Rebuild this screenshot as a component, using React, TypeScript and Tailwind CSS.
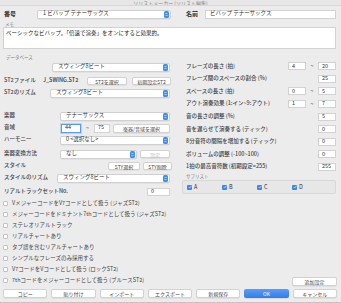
import React from "react";

const Stepper = () => (
  <span className="ml-auto mr-[1px] flex h-[7px] w-[5px] items-center justify-center rounded-[1.5px] bg-[#4190f0]">
    <svg width="3" height="5" viewBox="0 0 6 10">
      <path d="M1 4 L3 2 L5 4 M1 6 L3 8 L5 6" stroke="white" strokeWidth="1.2" fill="none" />
    </svg>
  </span>
);

const Select = ({ text, className }: { text: string; className: string }) => (
  <div
    className={
      "flex h-[9px] items-center rounded-[2px] border border-[#d0d0d0] bg-white pl-[5px] text-[5.5px] leading-none text-[#333] shadow-[0_0.5px_0.5px_rgba(0,0,0,0.08)] " +
      className
    }
  >
    <span className="whitespace-nowrap">{text}</span>
    <Stepper />
  </div>
);

const Input = ({ text, className = "w-[18px]", focus = false }: { text: string; className?: string; focus?: boolean }) => (
  <div
    className={
      "flex h-[8px] items-center bg-white pl-[3px] text-[5.5px] leading-none text-[#333] " +
      (focus ? "border border-[#5b9bf0] shadow-[0_0_0_0.8px_#a8cbf6] " : "border border-[#d2d2d2] ") +
      className
    }
  >
    {text}
  </div>
);

const Btn = ({ text, className, disabled = false }: { text: string; className: string; disabled?: boolean }) => (
  <div
    className={
      "flex h-[8px] items-center justify-center whitespace-nowrap rounded-[2px] border border-[#d2d2d2] bg-white text-[5px] leading-none shadow-[0_0.5px_0.5px_rgba(0,0,0,0.1)] " +
      (disabled ? "text-[#bbbbbb] " : "text-[#444] ") +
      className
    }
  >
    {text}
  </div>
);

const Label = ({ text, className }: { text: string; className: string }) => (
  <div className={"whitespace-nowrap pl-[1px] text-[5.5px] font-medium leading-none text-[#444] " + className}>{text}</div>
);

const Check = () => (
  <span className="flex h-[5px] w-[5px] items-center justify-center rounded-[1px] bg-[#3c87ee]">
    <svg width="4" height="4" viewBox="0 0 8 8">
      <path d="M1.5 4.2 L3.3 6 L6.6 2" stroke="white" strokeWidth="1.3" fill="none" />
    </svg>
  </span>
);

const rightRows: { label: string; a?: string; b: string }[] = [
  { label: "フレーズの長さ (拍)", a: "4", b: "20" },
  { label: "フレーズ間のスペースの割合 (%)", b: "25" },
  { label: "スペースの長さ (拍)", a: "0", b: "5" },
  { label: "アウト演奏効果 (1:イン~9:アウト)", a: "1", b: "7" },
  { label: "音の長さの調整 (%)", b: "5" },
  { label: "音を遅らせて演奏する (ティック)", b: "0" },
  { label: "8分音符の間隔を増加する (ティック)", b: "0" },
  { label: "ボリュームの調整 (-100~100)", b: "0" },
  { label: "1拍の最高音符数 (初期設定=255)", b: "255" },
];

const checks = [
  "VメジャーコードをV7コードとして扱う (ジャズST2)",
  "メジャーコードをドミナント7thコードとして扱う (ジャズST2)",
  "ステレオリアルトラック",
  "リアルチャートあり",
  "タブ譜を含むリアルチャートあり",
  "シンプルなフレーズのみ採用する",
  "V7コードをVコードとして扱う (ロックST2)",
  "7thコードをメジャーコードとして扱う (ブルースST2)",
];

export default function App() {
  return (
    <div className="h-[303px] w-[341px] overflow-hidden border-b border-[#c4c4c4] bg-[#ececec] font-['Noto_Sans_CJK_JP','Noto_Sans',sans-serif] text-[#444]">
      {/* title bar */}
      <div className="flex h-[6px] items-end justify-center overflow-hidden border-b border-[#d8d8d8] bg-[#e6e6e6]">
        <span className="mb-[0.5px] whitespace-nowrap text-[5px] leading-[5px] text-[#8a8a8a]">ソリストメーカー (ソリスト編集)</span>
      </div>

      {/* number / name */}
      <div className="mt-[3px] flex h-[10px] items-center pl-[4px] pr-[5px]">
        <div className="w-[33px] text-[6px] font-bold leading-none text-[#333]">番号</div>
        <Select text="1 ビバップ テナーサックス" className="w-[134px]" />
        <div className="ml-[15px] w-[19px] text-[6px] font-bold leading-none text-[#333]">名前</div>
        <div className="flex h-[9px] flex-1 items-center border border-[#d2d2d2] bg-white pl-[4px] text-[5.5px] leading-none text-[#333]">
          ビバップ テナーサックス
        </div>
      </div>

      {/* memo */}
      <div className="mt-[2px] h-[6px] pl-[5px] text-[4.5px] leading-[6px] text-[#777]">メモ</div>
      <div className="ml-[3px] mr-[5px] h-[22px] border border-[#d2d2d2] bg-white px-[2px] pt-[2px] text-[5.5px] leading-[6px] text-[#222]">
        ベーシックなビバップ。「倍速で演奏」をオンにすると効果的。
      </div>

      {/* main two columns */}
      <div className="mt-[3px] flex pl-[3px] pr-[5px]">
        {/* left column */}
        <div className="w-[169px]">
          <div className="mt-[1px] h-[8px] pl-[3px] text-[4.5px] leading-[8px] text-[#777]">データベース</div>
          <div className="flex h-[12px] items-center">
            <div className="w-[49px]" />
            <Select text="スウィング8ビート" className="w-[118px]" />
          </div>
          <div className="mt-[2px] flex h-[12px] items-center">
            <Label text="ST2ファイル" className="w-[40px]" />
            <div className="w-[44px] text-[5.5px] font-medium leading-none text-[#333]">J_SWING.ST2</div>
            <Btn text="ST2を選択" className="w-[40px]" />
            <Btn text="初期設定ST2" className="ml-[5px] w-[39px]" />
          </div>
          <div className="flex h-[12px] items-center">
            <Label text="ST2のリズム" className="w-[47px]" />
            <Select text="スウィング8ビート" className="w-[120px]" />
          </div>

          <div className="mt-[11px] flex h-[12px] items-center">
            <Label text="楽器" className="w-[57px]" />
            <Select text="テナーサックス" className="w-[110px]" />
          </div>
          <div className="flex h-[12px] items-center">
            <Label text="音域" className="w-[58px]" />
            <Input text="44" className="h-[9px] w-[20px]" focus />
            <div className="w-[13px] text-center text-[6px] leading-none text-[#555]">~</div>
            <Input text="75" className="h-[9px] w-[16px]" />
            <Btn text="楽器/音域を選択" className="ml-[3px] h-[9px] w-[57px]" />
          </div>
          <div className="flex h-[12px] items-center">
            <Label text="ハーモニー" className="w-[57px]" />
            <Select text="0 <選択なし>" className="w-[110px]" />
          </div>
          <div className="mt-[2px] flex h-[12px] items-center">
            <Label text="楽器変換方法" className="w-[57px]" />
            <Select text="なし" className="w-[77px]" />
            <Btn text="設定" className="ml-[3px] w-[30px]" disabled />
          </div>
          <div className="flex h-[12px] items-center">
            <Label text="スタイル" className="w-[105px]" />
            <Btn text="STY選択" className="w-[32px]" />
            <Btn text="STY削除" className="ml-[3px] w-[29px]" />
          </div>
          <div className="flex h-[12px] items-center">
            <Label text="スタイルのリズム" className="w-[54px]" />
            <Select text="スウィング8ビート" className="w-[113px]" />
          </div>
          <div className="mt-[2px] flex h-[12px] items-center">
            <Label text="リアルトラックセットNo." className="w-[144px]" />
            <Input text="0" className="w-[23px]" />
          </div>
        </div>

        {/* right column */}
        <div className="ml-[10px] flex-1 pt-[8px]">
          {rightRows.map((r) => (
            <div key={r.label} className="flex h-[12.6px] items-center">
              <Label text={r.label} className="flex-1 pl-[4px]" />
              {r.a !== undefined ? (
                <>
                  <Input text={r.a} />
                  <div className="w-[12px] text-center text-[6px] leading-none text-[#555]">~</div>
                </>
              ) : null}
              <Input text={r.b} />
            </div>
          ))}
          <div className="h-[7px] pl-[4px] text-[4.5px] leading-[7px] text-[#777]">サブリスト</div>
          <div className="flex h-[14px] items-center rounded-[2px] border border-[#d8d8d8] bg-[#e7e7e7]">
            {["A", "B", "C", "D"].map((l) => (
              <div key={l} className="flex w-[35px] items-center pl-[4px]">
                <Check />
                <span className="ml-[2px] text-[5.5px] leading-none text-[#333]">{l}</span>
              </div>
            ))}
          </div>
        </div>
      </div>

      {/* checkboxes + extra button */}
      <div className="flex pl-[3px] pr-[4px]">
        <div className="flex-1">
          {checks.map((c) => (
            <div key={c} className="flex h-[11px] items-center">
              <span className="h-[5px] w-[5px] rounded-[1px] border border-[#c2c2c2] bg-white" />
              <span className="ml-[4px] whitespace-nowrap text-[5.5px] leading-none text-[#444]">{c}</span>
            </div>
          ))}
        </div>
        <div className="flex items-end pb-[0.5px]">
          <Btn text="追加設定" className="h-[9px] w-[45px]" />
        </div>
      </div>

      {/* bottom buttons */}
      <div className="mt-[3px] grid grid-cols-7 gap-[4px] pl-[3px] pr-[4px]">
        <Btn text="コピー" className="h-[9px]" />
        <Btn text="貼り付け" className="h-[9px]" />
        <Btn text="インポート" className="h-[9px]" />
        <Btn text="エクスポート" className="h-[9px]" />
        <Btn text="新規保存" className="h-[9px]" />
        <div className="flex h-[9px] items-center justify-center rounded-[2px] bg-gradient-to-b from-[#5a9cf5] to-[#2f7ded] text-[5px] leading-none text-white shadow-[0_0.5px_0.5px_rgba(0,0,0,0.15)]">
          OK
        </div>
        <Btn text="キャンセル" className="h-[9px]" />
      </div>
    </div>
  );
}
